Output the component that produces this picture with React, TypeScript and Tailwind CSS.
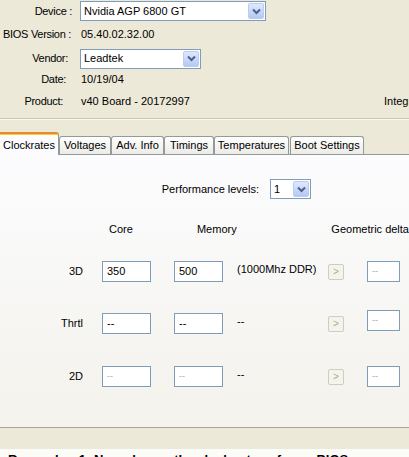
import React from "react";

const tabs = ["Voltages", "Adv. Info", "Timings", "Temperatures", "Boot Settings"];
const tabWidths = ["w-[52px]", "w-[53px]", "w-[50px]", "w-[75px]", "w-[74px]"];

function Chevron() {
  return (
    <svg width="9" height="7" viewBox="0 0 9 7">
      <path d="M1 1.5l3.5 3.5L8 1.5" fill="none" stroke="#4d6185" strokeWidth="2" />
    </svg>
  );
}

function Combo({ value, className }: { value: string; className: string }) {
  return (
    <div className={`flex h-[20px] items-center border border-[#7f9db9] bg-white ${className}`}>
      <span className="flex-1 whitespace-nowrap pl-[3px] text-[11px]">{value}</span>
      <span className="mr-px flex h-[16px] w-[16px] items-center justify-center rounded-[2px] border border-[#bccbf0] bg-linear-to-b from-[#dfe8fe] to-[#b3c8f5]">
        <Chevron />
      </span>
    </div>
  );
}

function Field({ value, muted, className = "w-[49px]" }: { value: string; muted?: boolean; className?: string }) {
  return (
    <div
      className={`flex h-[21px] items-center border border-[#7f9db9] bg-white pl-[4px] ${className} ${
        muted ? "text-[9px] text-[#aca899]" : "text-[11px] text-black"
      }`}
    >
      {value}
    </div>
  );
}

function Arrow() {
  return (
    <div className="flex h-[16px] w-[16px] items-center justify-center rounded-[2px] border border-[#cfcdc0] bg-[#f5f4ea] text-[10px] text-[#aca899]">
      &gt;
    </div>
  );
}

function InfoRow({ label, pr, h, children }: { label: string; pr: string; h: string; children: React.ReactNode }) {
  return (
    <div className={`flex items-center ${h}`}>
      <div className={`w-[74px] shrink-0 whitespace-nowrap text-right tracking-[-0.3px] ${pr}`}>{label}</div>
      <div className="ml-[6px] flex flex-1 items-center">{children}</div>
    </div>
  );
}

function ClockRow({
  label,
  core,
  memory,
  note,
  muted,
  deltaUp,
  mt,
}: {
  label: string;
  core: string;
  memory: string;
  note: string;
  muted?: boolean;
  deltaUp?: boolean;
  mt: string;
}) {
  return (
    <div className={`flex h-[21px] items-center ${mt}`}>
      <div className="w-[84px] shrink-0 pr-px text-right">{label}</div>
      <div className="ml-[18px]">
        <Field value={core} muted={muted} />
      </div>
      <div className="ml-[23px]">
        <Field value={memory} muted={muted} />
      </div>
      <div className="ml-[14px] w-[91px] shrink-0 whitespace-nowrap pb-[4px]">{note}</div>
      <Arrow />
      <div className={`ml-[23px] ${deltaUp ? "-mt-[6px]" : ""}`}>
        <Field value="--" muted className="w-[33px]" />
      </div>
    </div>
  );
}

export default function App() {
  return (
    <div className="h-[457px] w-[409px] overflow-hidden bg-[#ece9d8] font-['Liberation_Sans',Arial,sans-serif] text-[11px] text-black">
      {/* Device info */}
      <div className="pt-px">
        <InfoRow label="Device :" pr="pr-[2px]" h="h-[20px]">
          <Combo value="Nvidia AGP 6800 GT" className="w-[186px]" />
        </InfoRow>
        <InfoRow label="BIOS Version :" pr="pr-[3px]" h="h-[26px]">
          <span className="pl-px">05.40.02.32.00</span>
        </InfoRow>
        <InfoRow label="Vendor:" pr="pr-[6px]" h="h-[23px]">
          <Combo value="Leadtek" className="w-[121px]" />
        </InfoRow>
        <InfoRow label="Date:" pr="pr-[8px]" h="h-[18px]">
          <span className="pl-px">10/19/04</span>
        </InfoRow>
        <InfoRow label="Product:" pr="pr-[11px]" h="h-[26px]">
          <span className="flex-1 whitespace-nowrap pl-px">v40 Board - 20172997</span>
          <span className="w-[25px] overflow-hidden whitespace-nowrap">Integrity</span>
        </InfoRow>
      </div>
      <div className="mt-[4px] h-[2px] border-t border-[#c9c6b6] bg-white/70" />

      {/* Tabs */}
      <div className="flex h-[34px] items-end">
        <div className="relative z-10 -mb-px flex h-[23px] w-[59px] items-start rounded-tr-[3px] border-r border-t-[2px] border-r-[#919b9c] border-t-[#e68b2c] bg-[#fcfcfe] pl-[3px] pt-[3px] shadow-[inset_0_1px_0_#ffc83c]">
          Clockrates
        </div>
        {tabs.map((t, i) => (
          <div
            key={t}
            className={`flex h-[18px] items-center justify-center whitespace-nowrap rounded-t-[3px] border border-b-0 border-[#919b9c] bg-linear-to-b from-white to-[#ecebe6] ${tabWidths[i]} ${
              i === 4 ? "ml-px" : ""
            }`}
          >
            {t}
          </div>
        ))}
      </div>

      {/* Panel */}
      <div className="h-[274px] border-y border-t-[#919b9c] border-b-[#a9a698] bg-linear-to-b from-[#fcfcfe] to-[#f3f2ec]">
        <div className="mt-[24px] flex h-[20px] items-center">
          <div className="w-[259px] text-right">Performance levels:</div>
          <div className="ml-[11px]">
            <Combo value="1" className="w-[41px]" />
          </div>
        </div>

        <div className="mt-[23px] flex h-[14px] items-center whitespace-nowrap">
          <span className="ml-[109px] w-[89px]">Core</span>
          <span className="w-[136px]">Memory</span>
          <span>Geometric delta</span>
        </div>

        <ClockRow label="3D" core="350" memory="500" note="(1000Mhz DDR)" mt="mt-[25px]" />
        <ClockRow label="Thrtl" core="--" memory="--" note="--" deltaUp mt="mt-[31px]" />
        <ClockRow label="2D" core="--" memory="--" note="--" muted mt="mt-[32px]" />
      </div>

      <div className="h-[21px]" />
      <div className="bg-[#fbfbf8] pl-[8px] pt-[4px] text-[13px] font-bold leading-[14px] whitespace-nowrap">
        Remember 1: Now change the clock rates of your BIOS
      </div>
    </div>
  );
}
